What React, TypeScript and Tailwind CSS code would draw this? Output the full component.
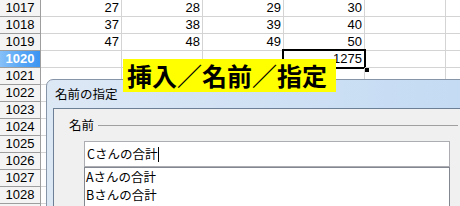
const rows: { n: number | null; v: string[] }[] = [
  { n: 1017, v: ['27', '28', '29', '30', '', ''] },
  { n: 1018, v: ['37', '38', '39', '40', '', ''] },
  { n: 1019, v: ['47', '48', '49', '50', '', ''] },
  { n: 1020, v: ['', '', '', '1275', '', ''] },
  { n: 1021, v: ['', '', '', '', '', ''] },
  { n: 1022, v: ['', '', '', '', '', ''] },
  { n: 1023, v: ['', '', '', '', '', ''] },
  { n: 1024, v: ['', '', '', '', '', ''] },
  { n: 1025, v: ['', '', '', '', '', ''] },
  { n: 1026, v: ['', '', '', '', '', ''] },
  { n: 1027, v: ['', '', '', '', '', ''] },
  { n: 1028, v: ['', '', '', '', '', ''] },
  // next row only peeks in at the bottom edge
  { n: null, v: ['', '', '', '', '', ''] },
];

const Row = ({ n, v }: { n: number | null; v: string[] }) => {
  const active = n === 1020;
  return (
    <div className="flex h-[17px]">
      {active ? (
        <div className="w-[41px] shrink-0 border-r border-b border-[#9e9e9e] bg-linear-to-r from-[#86c0f8] via-[#5aa8f6] to-[#3b94f2] flex items-center justify-center text-white font-bold">
          {n}
        </div>
      ) : (
        <div className="w-[41px] shrink-0 border-r border-b border-[#9e9e9e] bg-[#f4f4f4] flex items-center justify-center">
          {n}
        </div>
      )}
      {v.map((val, i) => (
        <div
          key={i}
          className="relative w-[81px] shrink-0 border-r border-b border-[#d4d4d4] text-right pr-[2px] leading-[16px]"
        >
          {val}
          {active && i === 3 && (
            <>
              <div className="absolute left-[-2px] top-[-2px] w-[84px] h-[20px] border-2 border-black" />
              <div className="absolute left-[80px] top-[16px] w-[5px] h-[5px] bg-black" />
            </>
          )}
        </div>
      ))}
    </div>
  );
};

export default function App() {
  return (
    <div className="relative w-[460px] h-[206px] overflow-hidden bg-white text-[13px] text-black font-['Liberation_Sans','Noto_Sans_CJK_JP',sans-serif]">
      <div className="flex flex-col">
        {rows.map((r, i) => (
          <Row key={i} n={r.n} v={r.v} />
        ))}
      </div>

      {/* dialog */}
      <div className="absolute left-[46px] top-[79px] w-[440px] h-[150px] rounded-tl-[7px] border border-[#8795a8] bg-linear-to-r from-[#dde8f5] to-[#c2daf3] flex flex-col font-['Noto_Sans_CJK_JP',sans-serif]">
        <div className="h-[28px] shrink-0 pl-[8px] flex items-center text-[12.5px]">名前の指定</div>
        <div className="flex-1 ml-[6px] border-l border-t border-[#6d7f95] bg-[#f0f0f0]">
          <div className="w-[404px]">
            <div className="mt-[9px] h-[14px] pl-[15px] flex items-center text-[12.5px]">
              <span>名前</span>
              <div className="flex-1 ml-[4px] h-px bg-[#a0a0a0]" />
            </div>
            <div className="ml-[30px] mt-[9px] w-[366px] h-[26px] border border-[#abadb3] bg-white flex items-center pl-[2px] text-[12.5px]">
              <span>Cさんの合計</span>
              <span className="ml-[1px] w-px h-[15px] bg-black" />
            </div>
            <div className="ml-[30px] w-[366px] h-[60px] border border-[#828790] bg-white text-[12.5px]">
              <div className="h-[18px] pl-[1px] flex items-center">Aさんの合計</div>
              <div className="h-[18px] pl-[1px] flex items-center">Bさんの合計</div>
            </div>
          </div>
        </div>
      </div>

      {/* label */}
      <div className="absolute left-[123px] top-[59px] w-[213px] h-[33px] bg-[#ffff00] flex items-center pl-[4px] text-[25px] font-bold leading-none font-['Noto_Sans_CJK_JP',sans-serif]">
        挿入／名前／指定
      </div>
    </div>
  );
}
